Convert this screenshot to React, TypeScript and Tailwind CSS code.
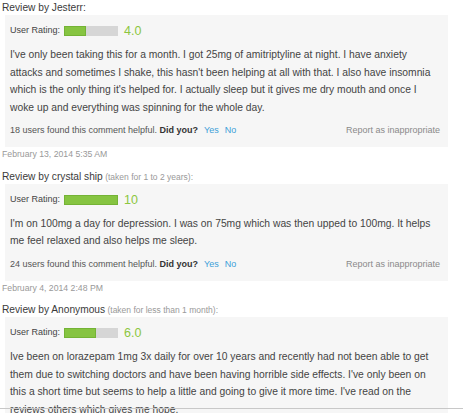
import React from 'react'

interface Review {
  author: string
  taken?: string
  rating: number
  score: string
  body: string
  helpful?: number
  date?: string
}

const reviews: Review[] = [
  {
    author: 'Jesterr',
    rating: 4,
    score: '4.0',
    body: "I've only been taking this for a month. I got 25mg of amitriptyline at night. I have anxiety attacks and sometimes I shake, this hasn't been helping at all with that. I also have insomnia which is the only thing it's helped for. I actually sleep but it gives me dry mouth and once I woke up and everything was spinning for the whole day.",
    helpful: 18,
    date: 'February 13, 2014 5:35 AM',
  },
  {
    author: 'crystal ship',
    taken: 'taken for 1 to 2 years',
    rating: 10,
    score: '10',
    body: "I'm on 100mg a day for depression. I was on 75mg which was then upped to 100mg. It helps me feel relaxed and also helps me sleep.",
    helpful: 24,
    date: 'February 4, 2014 2:48 PM',
  },
  {
    author: 'Anonymous',
    taken: 'taken for less than 1 month',
    rating: 6,
    score: '6.0',
    body: "Ive been on lorazepam 1mg 3x daily for over 10 years and recently had not been able to get them due to switching doctors and have been having horrible side effects. I've only been on this a short time but seems to help a little and going to give it more time. I've read on the reviews others which gives me hope.",
  },
]

const RatingBar: React.FC<{ rating: number; score: string }> = ({ rating, score }) => (
  <div className="flex items-center h-[14px]">
    <span className="text-[9px] text-[#444]">User Rating:</span>
    <div className="ml-[4px] w-[54px] h-[10px] bg-[#d6d6d6]">
      <div
        className="h-full bg-[#86c441] border border-[#74b335]"
        style={{ width: `${rating * 10}%` }}
      />
    </div>
    <span className="ml-[6px] text-[12.5px] text-[#8cc63f] leading-[14px]">{score}</span>
  </div>
)

const ReviewItem: React.FC<{ review: Review }> = ({ review }) => (
  <div className="mt-[7.5px] first:mt-0">
    <div className="h-[15px] leading-[15px] text-[10.2px] text-[#3a3a3a] pl-[2px]">
      Review by {review.author}
      {review.taken ? (
        <span className="text-[8.5px] text-[#999]"> ({review.taken}):</span>
      ) : (
        ':'
      )}
    </div>
    <div className="ml-[5px] w-[443px] bg-[#f6f6f6] pt-[9px] pb-[9px] pl-[5px] pr-[8px]">
      <RatingBar rating={review.rating} score={review.score} />
      <p className="mt-[8px] text-[10.3px] leading-[17.5px] text-[#444]">{review.body}</p>
      {review.helpful !== undefined && (
        <div className="mt-[8px] h-[14px] flex items-center justify-between text-[9px]">
          <div className="text-[#555]">
            {review.helpful} users found this comment helpful.{' '}
            <span className="font-bold text-[#333]">Did you?</span>
            <span className="ml-[6px] text-[#3d9fd8]">Yes</span>
            <span className="ml-[6px] text-[#3d9fd8]">No</span>
          </div>
          <span className="text-[#8a8a8a]">Report as inappropriate</span>
        </div>
      )}
    </div>
    {review.date && (
      <div className="h-[14px] leading-[14px] text-[8.7px] text-[#999] pl-[2px]">{review.date}</div>
    )}
  </div>
)

export default function App() {
  return (
    <div
      className="relative w-[463px] h-[413px] overflow-hidden bg-white"
      style={{ fontFamily: '"Liberation Sans", Arial, sans-serif' }}
    >
      {reviews.map((r) => (
        <ReviewItem key={r.author} review={r} />
      ))}
      <div className="absolute left-0 right-0 top-[408px] h-px bg-[#c8c8c8]" />
    </div>
  )
}
